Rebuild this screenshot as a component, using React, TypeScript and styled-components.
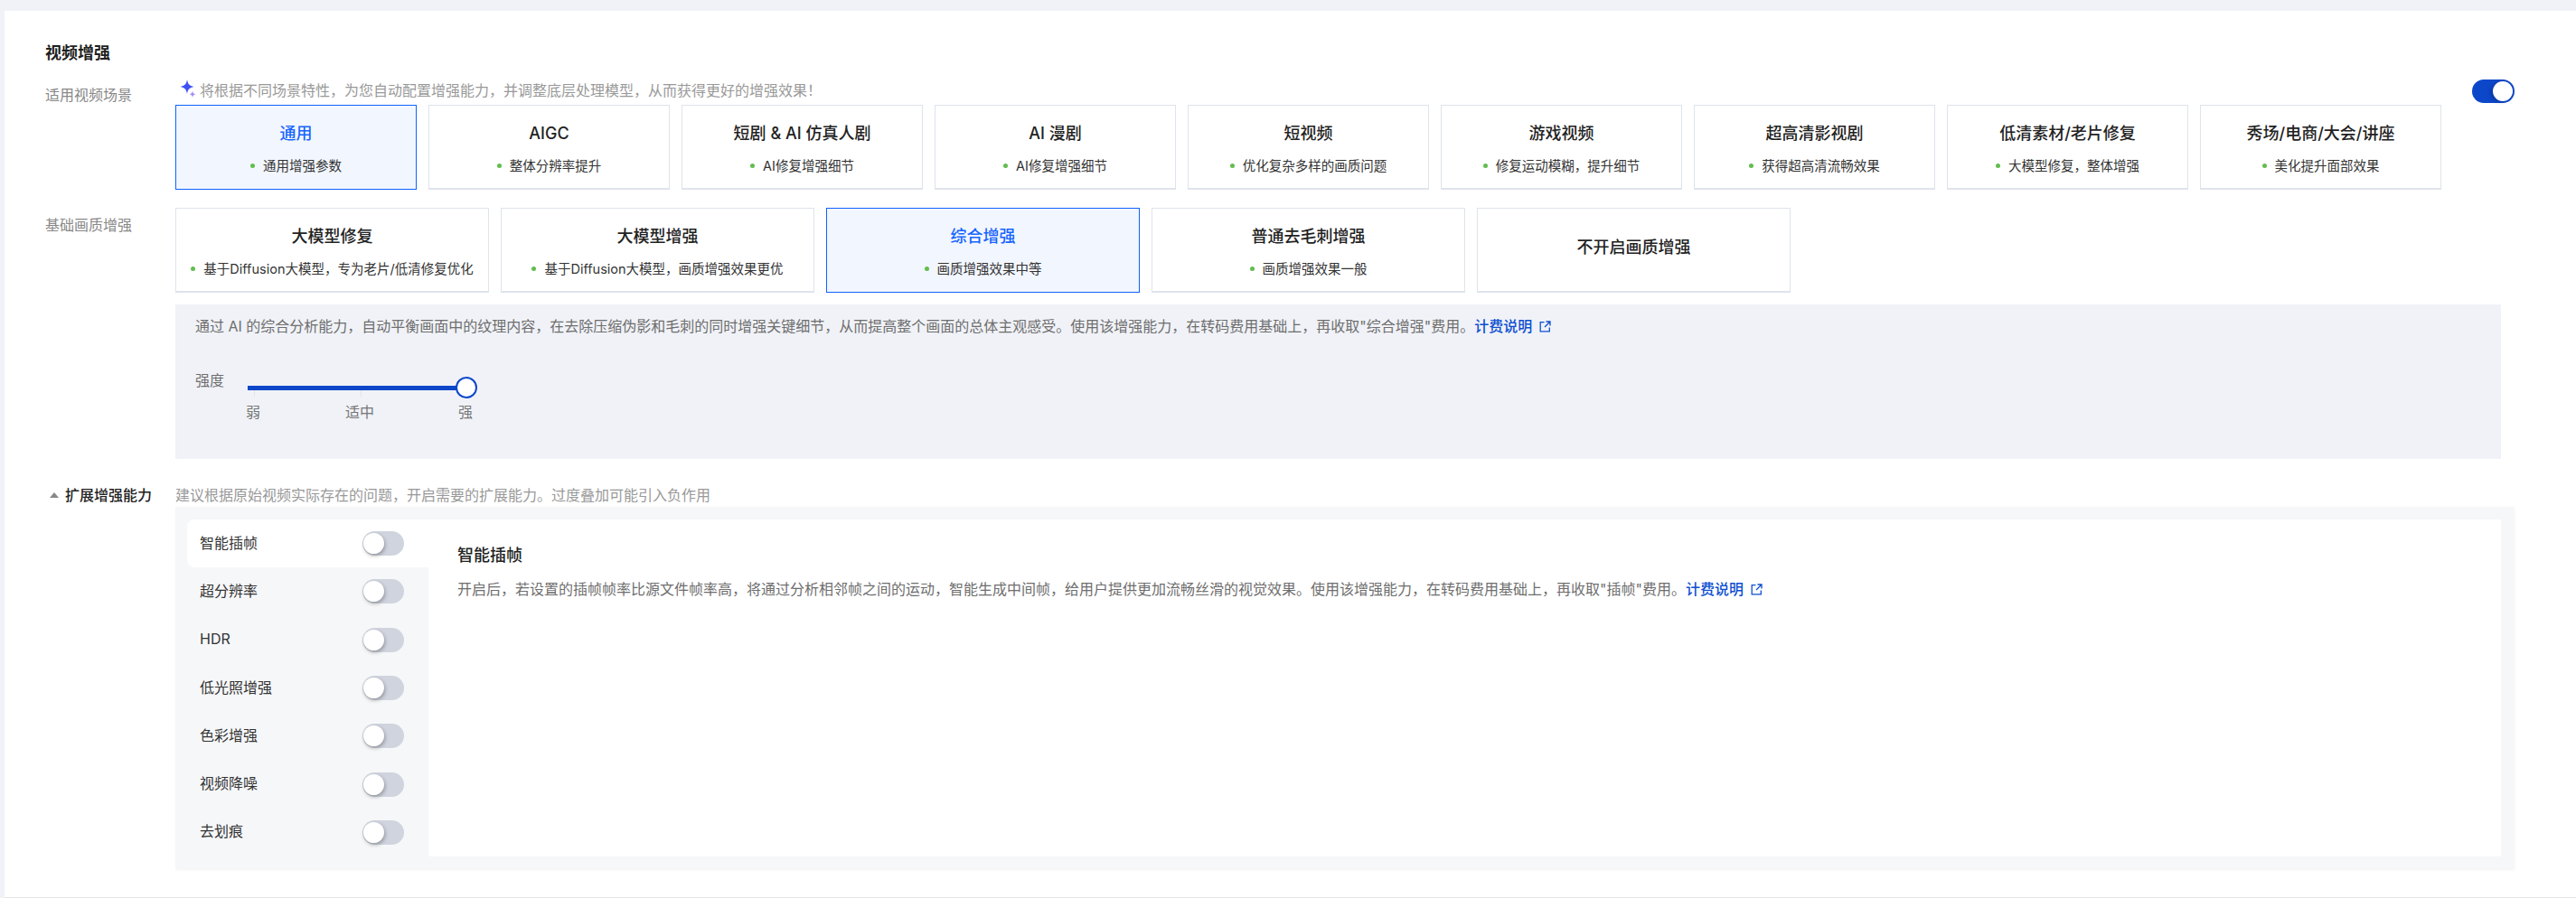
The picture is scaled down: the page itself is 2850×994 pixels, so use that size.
import React from "react";
import styled, { createGlobalStyle } from "styled-components";

const GlobalStyle = createGlobalStyle`
  html, body { margin: 0; padding: 0; background: #f0f2f7; }
  body { font-family: "Inter", "Noto Sans CJK SC", sans-serif; color: #222; }
`;

const Page = styled.div`
  width: 2850px;
  height: 994px;
  padding: 12px 0 0 5px;
  box-sizing: border-box;
`;
const Sheet = styled.div`
  height: 100%;
  background: #fff;
  padding: 32px 0 0 45px;
  box-sizing: border-box;
  border-bottom: 1px solid #e6e6e6;
`;
const Heading = styled.h2`
  margin: 0;
  font-size: 18px;
  line-height: 30px;
  font-weight: 700;
  color: #1f1f1f;
`;
const Row = styled.div<{ $top: number }>`
  display: flex;
  align-items: flex-start;
  margin-top: ${(p) => p.$top}px;
`;
const RowLabel = styled.div<{ $pt: number }>`
  width: 144px;
  flex: none;
  padding-top: ${(p) => p.$pt}px;
  font-size: 16px;
  line-height: 24px;
  color: #888;
`;
const Main = styled.div`
  display: flex;
  flex-direction: column;
`;
const Hint = styled.div`
  display: flex;
  align-items: flex-start;
  height: 28px;
  font-size: 16px;
  line-height: 24px;
  color: #999;
  gap: 4px;
  padding-left: 5px;
`;
const Cards = styled.div`
  display: flex;
  gap: 13px;
`;
const Card = styled.div<{ $w: number; $on?: boolean; $single?: boolean }>`
  width: ${(p) => p.$w}px;
  height: 94px;
  flex: none;
  box-sizing: border-box;
  border: 1px solid ${(p) => (p.$on ? "#0f62fe" : "#dfe3ec")};
  border-bottom-width: ${(p) => (p.$on ? 1 : 2)}px;
  background: ${(p) => (p.$on ? "#f2f6fe" : "#fff")};
  display: flex;
  flex-direction: column;
  align-items: center;
  padding-top: ${(p) => (p.$single ? 29 : 17)}px;
  gap: 12px;
`;
const CardTitle = styled.div<{ $on?: boolean }>`
  font-size: 18px;
  line-height: 27px;
  font-weight: 500;
  color: ${(p) => (p.$on ? "#1664ff" : "#222")};
`;
const CardSub = styled.div`
  display: flex;
  align-items: center;
  gap: 9px;
  font-size: 14.5px;
  line-height: 21px;
  color: #333;
  white-space: nowrap;
`;
const Dot = styled.span`
  width: 5px;
  height: 5px;
  border-radius: 50%;
  background: #62bd4d;
`;
const Switch = styled.div<{ $on?: boolean }>`
  position: relative;
  flex: none;
  width: ${(p) => (p.$on ? 47 : 46)}px;
  height: ${(p) => (p.$on ? 26 : 27)}px;
  border-radius: 14px;
  background: ${(p) => (p.$on ? "#0d47c9" : "#cfd4de")};
`;
const Thumb = styled.span<{ $on?: boolean }>`
  position: absolute;
  top: 2px;
  left: ${(p) => (p.$on ? 23 : 1)}px;
  width: ${(p) => (p.$on ? 22 : 23)}px;
  height: ${(p) => (p.$on ? 22 : 23)}px;
  border-radius: 50%;
  background: #fff;
  box-shadow: ${(p) => (p.$on ? "-3px 1px 4px rgba(0,0,40,.2)" : "1px 2px 4px rgba(0,0,0,.3)")};
`;
const TopSwitch = styled(Switch)`
  margin: 0 0 0 34px;
`;
const Detail = styled.div`
  margin: 13px 0 0 144px;
  width: 2573px;
  height: 171px;
  background: #f0f2f7;
  padding: 9px 22px 0;
  box-sizing: border-box;
`;
const DetailText = styled.div`
  font-size: 16px;
  line-height: 30px;
  color: #6e6e6e;
  white-space: nowrap;
  display: flex;
  align-items: center;
`;
const Link = styled.span`
  color: #0d4fd0;
  font-weight: 500;
`;
const LinkIcon = styled.svg`
  margin-left: 8px;
  flex: none;
`;
const Strength = styled.div`
  display: flex;
  margin-top: 32px;
`;
const StrengthLabel = styled.div`
  width: 58px;
  padding-top: 1px;
  font-size: 16px;
  line-height: 24px;
  color: #6e6e6e;
`;
const Slider = styled.div`
  position: relative;
  width: 242px;
  height: 62px;
`;
const Track = styled.div`
  position: absolute;
  left: 0;
  top: 19px;
  width: 231px;
  height: 5px;
  background: #0d47c9;
`;
const Tick = styled.span<{ $x: number }>`
  position: absolute;
  left: ${(p) => p.$x}px;
  top: 24px;
  width: 1px;
  height: 7px;
  background: #dfe3ec;
`;
const SliderThumb = styled.span`
  position: absolute;
  left: 230px;
  top: 9px;
  width: 24px;
  height: 24px;
  box-sizing: border-box;
  border: 2px solid #0d47c9;
  border-radius: 50%;
  background: #fff;
`;
const Mark = styled.span<{ $x: number }>`
  position: absolute;
  left: ${(p) => p.$x}px;
  top: 36px;
  transform: translateX(-50%);
  font-size: 16px;
  line-height: 24px;
  color: #777;
  white-space: nowrap;
`;
const ExtLabel = styled.div`
  width: 144px;
  height: 26px;
  flex: none;
  display: flex;
  align-items: flex-start;
  gap: 7px;
  padding: 1px 0 0 5px;
  box-sizing: border-box;
  font-size: 16px;
  line-height: 24px;
  font-weight: 500;
  color: #222;
`;
const Caret = styled.span`
  width: 0;
  height: 0;
  margin-top: 9px;
  border-left: 5px solid transparent;
  border-right: 5px solid transparent;
  border-bottom: 6px solid #888;
`;
const ExtHint = styled.div`
  padding-top: 1px;
  font-size: 16px;
  line-height: 24px;
  color: #999;
`;
const ExtPanel = styled.div`
  display: flex;
  width: 2587px;
  height: 401px;
  margin-left: 144px;
  padding: 14px 14px 14px 13px;
  box-sizing: border-box;
  background: #f6f7f9;
  box-shadow: 1px 1px 3px rgba(0, 0, 0, 0.05);
`;
const Side = styled.div`
  width: 267px;
  flex: none;
`;
const SideItem = styled.div<{ $on?: boolean }>`
  height: 53.3px;
  display: flex;
  align-items: center;
  justify-content: space-between;
  padding: 0 27px 0 14px;
  background: ${(p) => (p.$on ? "#fff" : "transparent")};
  border-radius: ${(p) => (p.$on ? "8px 0 0 8px" : "0")};
`;
const SideLabel = styled.span`
  font-size: 16px;
  line-height: 24px;
  padding-bottom: 2px;
  color: #333;
`;
const Content = styled.div`
  flex: 1;
  background: #fff;
  padding: 25px 32px;
`;
const ContentTitle = styled.div`
  font-size: 18px;
  line-height: 30px;
  font-weight: 500;
  color: #222;
`;
const ContentText = styled(DetailText)`
  margin-top: 7px;
`;

const scenes = [
  ["通用", "通用增强参数"],
  ["AIGC", "整体分辨率提升"],
  ["短剧 & AI 仿真人剧", "AI修复增强细节"],
  ["AI 漫剧", "AI修复增强细节"],
  ["短视频", "优化复杂多样的画质问题"],
  ["游戏视频", "修复运动模糊，提升细节"],
  ["超高清影视剧", "获得超高清流畅效果"],
  ["低清素材/老片修复", "大模型修复，整体增强"],
  ["秀场/电商/大会/讲座", "美化提升面部效果"],
];
const bases = [
  ["大模型修复", "基于Diffusion大模型，专为老片/低清修复优化"],
  ["大模型增强", "基于Diffusion大模型，画质增强效果更优"],
  ["综合增强", "画质增强效果中等"],
  ["普通去毛刺增强", "画质增强效果一般"],
  ["不开启画质增强", ""],
];
const features = ["智能插帧", "超分辨率", "HDR", "低光照增强", "色彩增强", "视频降噪", "去划痕"];

const Sparkle = () => (
  <svg width="18" height="20" viewBox="0 0 17 20" style={{ flex: "none" }}>
    <path d="M7.5 0 C8.3 4.8 10 7 15 8 C10 9 8.3 11.2 7.5 16 C6.7 11.2 5 9 0 8 C5 7 6.7 4.8 7.5 0Z" fill="#3f51f5" />
    <path d="M13.5 12.5 C13.9 15 14.6 15.8 17 16.3 C14.6 16.8 13.9 17.6 13.5 20 C13.1 17.6 12.4 16.8 10 16.3 C12.4 15.8 13.1 15 13.5 12.5Z" fill="#a58bfa" />
  </svg>
);
const ExtIcon = () => (
  <LinkIcon width="13" height="13" viewBox="0 0 13 13" fill="none" stroke="#0d4fd0" strokeWidth="1.3">
    <path d="M5.5 1.7H1.2V11.8H11.3V7.5" />
    <path d="M7.5 1H12V5.5M12 1L6 7" />
  </LinkIcon>
);

export default function App() {
  return (
    <>
      <GlobalStyle />
      <Page>
        <Sheet>
          <Heading>视频增强</Heading>
          <Row $top={14}>
            <RowLabel $pt={5}>适用视频场景</RowLabel>
            <Main>
              <Hint>
                <Sparkle />
                将根据不同场景特性，为您自动配置增强能力，并调整底层处理模型，从而获得更好的增强效果！
              </Hint>
              <Cards>
                {scenes.map(([t, s], i) => (
                  <Card key={t} $w={267} $on={i === 0}>
                    <CardTitle $on={i === 0}>{t}</CardTitle>
                    <CardSub>
                      <Dot />
                      {s}
                    </CardSub>
                  </Card>
                ))}
              </Cards>
            </Main>
            <TopSwitch $on>
              <Thumb $on />
            </TopSwitch>
          </Row>
          <Row $top={20}>
            <RowLabel $pt={7}>基础画质增强</RowLabel>
            <Cards>
              {bases.map(([t, s], i) => (
                <Card key={t} $w={347} $on={i === 2} $single={!s}>
                  <CardTitle $on={i === 2}>{t}</CardTitle>
                  {s && (
                    <CardSub>
                      <Dot />
                      {s}
                    </CardSub>
                  )}
                </Card>
              ))}
            </Cards>
          </Row>
          <Detail>
            <DetailText>
              通过 AI 的综合分析能力，自动平衡画面中的纹理内容，在去除压缩伪影和毛刺的同时增强关键细节，从而提高整个画面的总体主观感受。使用该增强能力，在转码费用基础上，再收取"综合增强"费用。
              <Link>计费说明</Link>
              <ExtIcon />
            </DetailText>
            <Strength>
              <StrengthLabel>强度</StrengthLabel>
              <Slider>
                <Track />
                <Tick $x={7} />
                <Tick $x={125} />
                <SliderThumb />
                <Mark $x={6}>弱</Mark>
                <Mark $x={124}>适中</Mark>
                <Mark $x={241}>强</Mark>
              </Slider>
            </Strength>
          </Detail>
          <Row $top={27}>
            <ExtLabel>
              <Caret />
              扩展增强能力
            </ExtLabel>
            <ExtHint>建议根据原始视频实际存在的问题，开启需要的扩展能力。过度叠加可能引入负作用</ExtHint>
          </Row>
          <ExtPanel>
            <Side>
              {features.map((f, i) => (
                <SideItem key={f} $on={i === 0}>
                  <SideLabel>{f}</SideLabel>
                  <Switch>
                    <Thumb />
                  </Switch>
                </SideItem>
              ))}
            </Side>
            <Content>
              <ContentTitle>智能插帧</ContentTitle>
              <ContentText>
                开启后，若设置的插帧帧率比源文件帧率高，将通过分析相邻帧之间的运动，智能生成中间帧，给用户提供更加流畅丝滑的视觉效果。使用该增强能力，在转码费用基础上，再收取"插帧"费用。
                <Link>计费说明</Link>
                <ExtIcon />
              </ContentText>
            </Content>
          </ExtPanel>
        </Sheet>
      </Page>
    </>
  );
}
